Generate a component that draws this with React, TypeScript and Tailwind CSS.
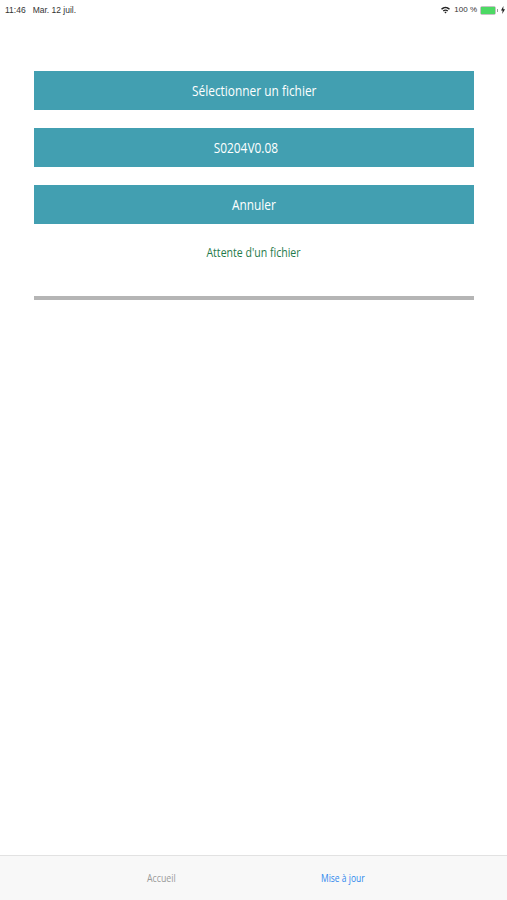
import React from "react";

const buttons = [
  { label: "Sélectionner un fichier", cls: "" },
  // this label sits a bit left of centre in the app
  { label: "S0204V0.08", cls: "pr-[16px]" },
  { label: "Annuler", cls: "" },
];

function WifiIcon() {
  return (
    <svg width="9" height="8" viewBox="0 0 10 8" fill="#222">
      <path d="M0 2.6 C2.8 -0.5 7.2 -0.5 10 2.6 L8.9 3.8 C6.6 1.4 3.4 1.4 1.1 3.8 Z" />
      <path d="M2 4.6 C3.7 2.9 6.3 2.9 8 4.6 L7 5.7 C5.8 4.6 4.2 4.6 3 5.7 Z" />
      <path d="M3.8 6.5 C4.5 5.9 5.5 5.9 6.2 6.5 L5 7.9 Z" />
    </svg>
  );
}

function Battery() {
  return (
    <div className="flex items-center gap-[1px]">
      <div className="w-[16px] h-[9px] rounded-[2px] border border-[#c4c4c4] flex">
        <div className="flex-1 bg-[#4cd964]" />
      </div>
      <div className="w-[1px] h-[3px] bg-[#9a9a9a]" />
      <svg width="4" height="8" viewBox="0 0 4 8" fill="#222" className="ml-[2px]">
        <path d="M2.4 0 L0 4.5 H1.6 L1.2 8 L4 3.2 H2.3 Z" />
      </svg>
    </div>
  );
}

export default function App() {
  return (
    <div className="w-[507px] h-[900px] flex flex-col bg-white font-['Open_Sans','Noto_Sans',sans-serif]">
      <div className="h-[20px] flex items-center justify-between pl-[5px] pr-[2px] text-[8px] text-[#333] font-['Liberation_Sans',sans-serif]">
        <div className="flex gap-[7px] text-[8.5px]">
          <span>11:46</span>
          <span>Mar. 12 juil.</span>
        </div>
        <div className="flex items-center gap-[3px]">
          <WifiIcon />
          <span className="ml-[1px]">100 %</span>
          <Battery />
        </div>
      </div>

      <div className="flex-1 pl-[34px] pr-[33px] pt-[51px]">
        <div className="flex flex-col gap-[18px]">
          {buttons.map((b) => (
            <div
              key={b.label}
              className={`h-[39px] flex items-center justify-center bg-[#429fb1] text-white text-[14px] ${b.cls}`}
            >
              <span className="inline-block scale-x-[0.85]">{b.label}</span>
            </div>
          ))}
        </div>
        <div className="mt-[20px] text-center text-[12px] leading-[18px] text-[#1f7a4a]">
          <span className="inline-block scale-x-[0.88]">Attente d'un fichier</span>
        </div>
        <div className="mt-[34px] h-[4px] bg-[#b5b5b5]" />
      </div>

      <div className="h-[45px] border-t border-[#e2e2e2] bg-[#f8f8f8] flex items-center text-[10px]">
        <div className="w-[322px] text-center text-[#9a9a9a]">
          <span className="inline-block scale-x-[0.88]">Accueil</span>
        </div>
        <div className="text-[#2f88ee] w-[43px] whitespace-nowrap ml-[-1px]">
          <span className="inline-block origin-left scale-x-[0.85]">Mise à jour</span>
        </div>
      </div>
    </div>
  );
}
